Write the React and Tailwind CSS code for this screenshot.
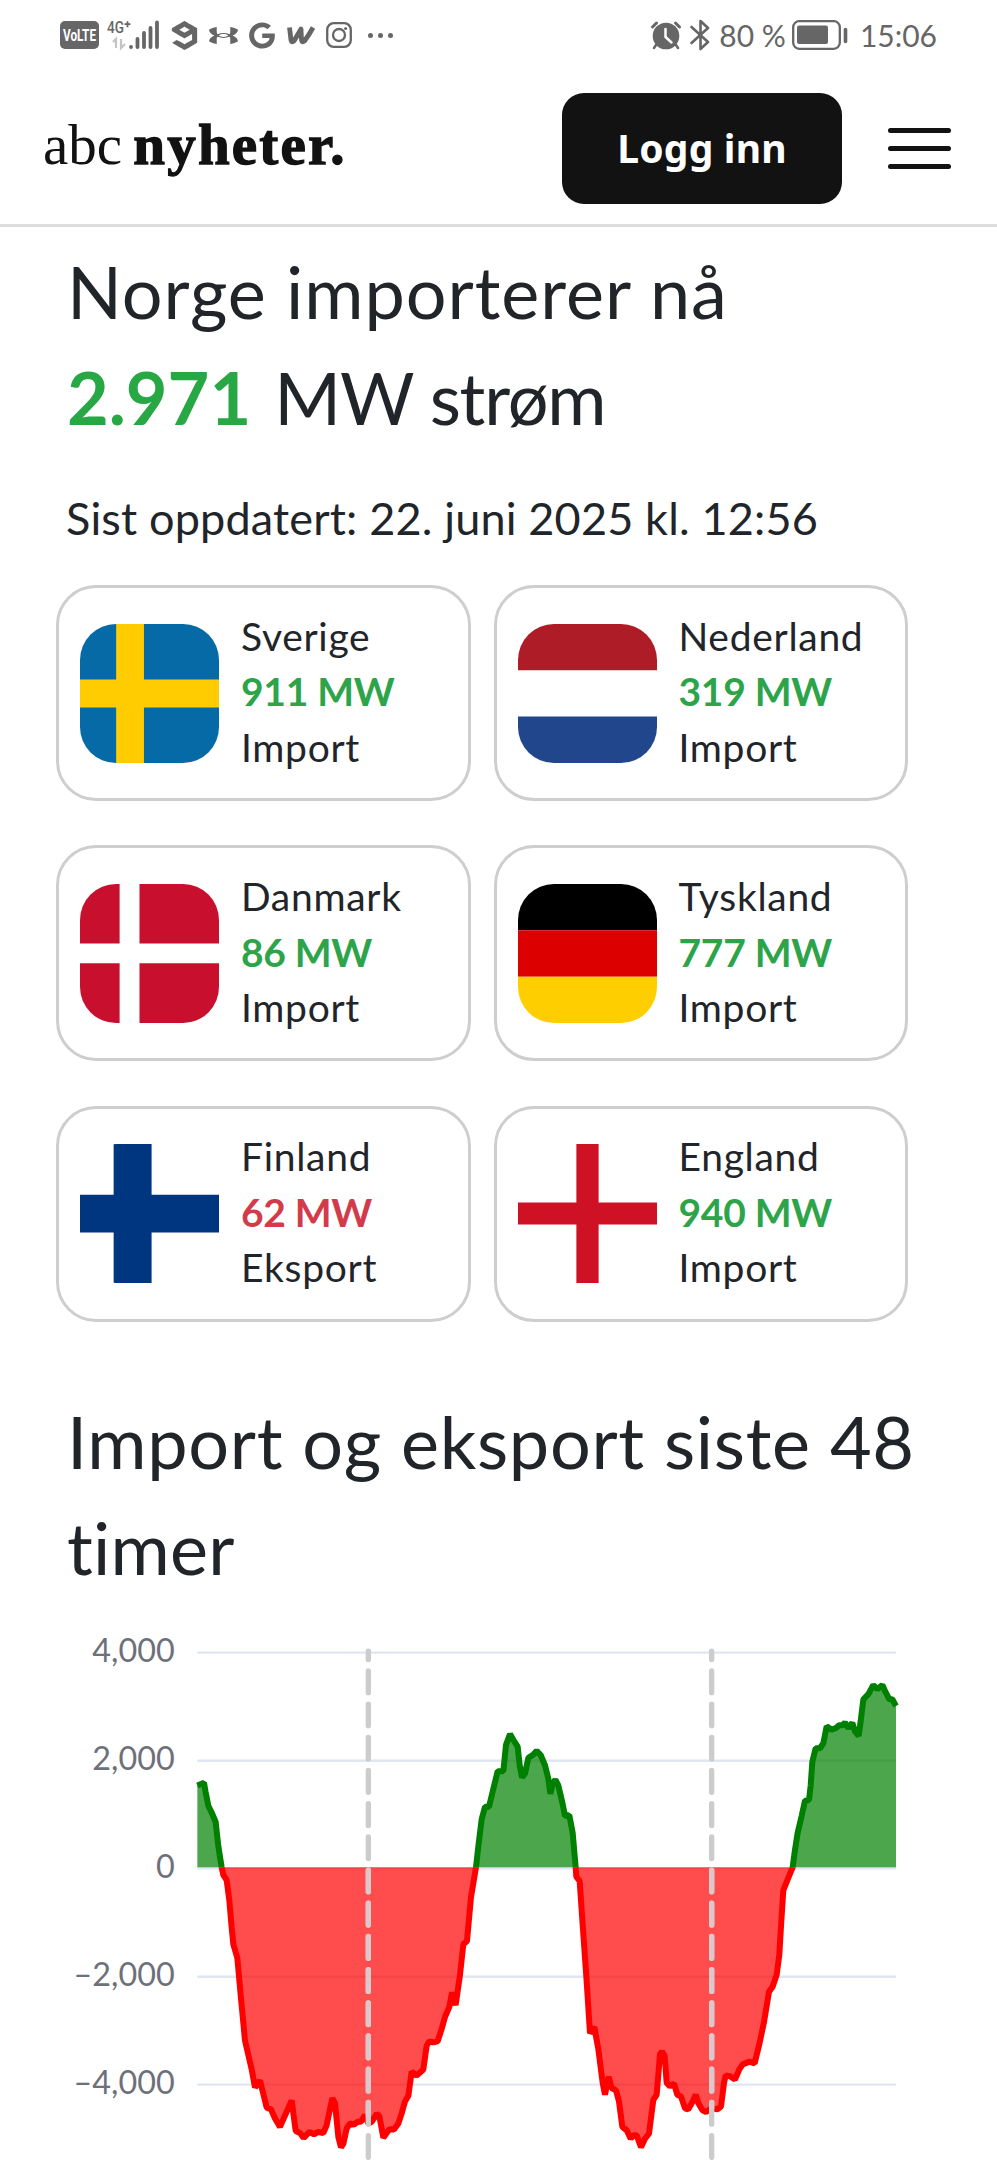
import { FaGoogle } from "react-icons/fa";
import { Si9Gag, SiUnderarmour } from "react-icons/si";

const countries = [
    { name: "Sverige", value: "911 MW", type: "Import", flag: SwedenFlag },
    { name: "Nederland", value: "319 MW", type: "Import", flag: NetherlandsFlag },
    { name: "Danmark", value: "86 MW", type: "Import", flag: DenmarkFlag },
    { name: "Tyskland", value: "777 MW", type: "Import", flag: GermanyFlag },
    { name: "Finland", value: "62 MW", type: "Eksport", flag: FinlandFlag },
    { name: "England", value: "940 MW", type: "Import", flag: EnglandFlag },
];

// x,y pairs in the plot's own units, y = 702 is 0 MW
const curve = [
    "592,460 612,452 617,480 625,520 635,540 647,568 655,640 665,702 670,725 680,740 688,800 695,880 700,930 712,970",
    "722,1080 735,1215 755,1300 765,1353 780,1333 788,1365 800,1413 813,1418 825,1445 840,1470 860,1425 875,1392",
    "880,1430 887,1482 900,1488 911,1503 928,1485 942,1492 955,1485 970,1488 980,1465 997,1385 1005,1400 1015,1500",
    "1023,1530 1030,1520 1040,1475 1050,1460 1062,1463 1073,1455 1083,1455 1095,1435 1105,1460 1115,1455 1130,1432",
    "1138,1438 1150,1502 1168,1477 1182,1478 1195,1460 1205,1430 1215,1395 1225,1378 1235,1307 1250,1318 1270,1300",
    "1280,1230 1288,1217 1300,1220 1313,1217 1325,1180 1335,1145 1348,1115 1356,1072 1367,1110 1380,1020 1390,930",
    "1401,920 1413,790 1428,702 1435,640 1445,560 1455,523 1467,523 1480,470 1493,418 1510,418 1518,340 1530,308",
    "1540,325 1553,345 1559,400 1566,436 1575,425 1585,378 1598,370 1610,358 1622,370 1635,400 1645,440 1651,485",
    "1658,455 1666,443 1675,460 1688,515 1695,550 1708,548 1718,600 1727,702 1729,730 1739,743 1750,900 1760,1040",
    "1770,1193 1783,1175 1795,1240 1808,1340 1815,1375 1826,1322 1835,1355 1848,1362 1857,1395 1867,1470 1880,1480",
    "1892,1505 1900,1495 1910,1495 1923,1530 1935,1505 1947,1490 1960,1390 1970,1375 1980,1255 1986,1247 1994,1260",
    "2000,1340 2010,1350 2022,1342 2032,1375 2043,1380 2055,1415 2065,1418 2078,1395 2087,1375 2095,1400 2107,1420",
    "2118,1426 2135,1415 2152,1418 2163,1410 2172,1340 2177,1318 2190,1320 2205,1330 2218,1300 2228,1285 2248,1277",
    "2264,1282 2278,1225 2292,1160 2307,1070 2318,1055 2330,1020 2338,960 2344,860 2350,770 2360,745 2378,702",
    "2385,650 2393,600 2405,550 2415,505 2427,503 2432,460 2437,390 2447,350 2460,350 2470,335 2480,285 2495,295",
    "2508,290 2517,282 2527,282 2535,274 2545,290 2557,275 2565,300 2576,313 2582,270 2590,205 2605,190 2620,163",
    "2632,175 2647,163 2655,180 2668,205 2677,205 2688,225",
].join(" ");

const ticks = [
    { label: "4,000", y: 67 },
    { label: "2,000", y: 387 },
    { label: "0", y: 705 },
    { label: "–2,000", y: 1026 },
    { label: "–4,000", y: 1345 },
];

function SwedenFlag() {
    return (
        <svg viewBox="0 0 100 100" className="size-full">
            <path fill="#066aa7" d="M0 0h100v100H0z" />
            <path fill="#fecc00" d="M26 0h20v100H26zM0 40h100v20H0z" />
        </svg>
    )
}

function NetherlandsFlag() {
    return (
        <svg viewBox="0 0 100 100" className="size-full">
            <path fill="#fff" d="M0 0h100v100H0z" />
            <path fill="#ae1c28" d="M0 0h100v33.3H0z" />
            <path fill="#21468b" d="M0 66.6h100V100H0z" />
        </svg>
    )
}

function DenmarkFlag() {
    return (
        <svg viewBox="0 0 100 100" className="size-full">
            <path fill="#c8102e" d="M0 0h100v100H0z" />
            <path fill="#fff" d="M28.5 0h14.3v100H28.5zM0 42.8h100v14.3H0z" />
        </svg>
    )
}

function GermanyFlag() {
    return (
        <svg viewBox="0 0 100 100" className="size-full">
            <path d="M0 0h100v33.3H0z" />
            <path fill="#d00" d="M0 33.3h100v33.4H0z" />
            <path fill="#ffce00" d="M0 66.7h100V100H0z" />
        </svg>
    )
}

function FinlandFlag() {
    return (
        <svg viewBox="0 0 100 100" className="size-full">
            <path fill="#fff" d="M0 0h100v100H0z" />
            <path fill="#003580" d="M24.2 0h27.3v100H24.2zM0 36.5h100v27.2H0z" />
        </svg>
    )
}

function EnglandFlag() {
    return (
        <svg viewBox="0 0 100 100" className="size-full">
            <path fill="#fff" d="M0 0h100v100H0z" />
            <path fill="#ce1124" d="M42 0h16v100H42zM0 42h100v16H0z" />
        </svg>
    )
}

function StatusBar() {
    return (
        <div className="flex h-[70px] items-center justify-between pl-[60px] pr-[60px] text-[#666]">
            <div className="flex items-center">
                <svg width="39" height="28" viewBox="0 0 39 28" className="overflow-visible">
                    <rect width="39" height="28" rx="5" fill="#666" />
                    <text x="3" y="20" fill="#fff" fontFamily="Roboto, sans-serif" fontSize="16.500" fontWeight="700" textLength="33" lengthAdjust="spacingAndGlyphs">VoLTE</text>
                </svg>
                {/* Signal */}
                <svg width="52" height="30" viewBox="0 0 52 30" className="ml-2 overflow-visible">
                    <text x="0" y="13" fill="#666" fontFamily="Roboto, sans-serif" fontSize="17" fontWeight="500" textLength="17" lengthAdjust="spacingAndGlyphs">4G</text>
                    <path d="M20.500 1.200v6M17.500 4.200h6" stroke="#666" strokeWidth="1.800" />
                    <path d="M6 22l3-3v9M14 19v9l4-4" stroke="#c4c4c4" strokeWidth="2.200" fill="none" />
                    <path d="M24 27h.01M30.500 27v-8M37 27v-14M43.500 27V8M50 27V2.500" stroke="#666" strokeWidth="3.800" strokeLinecap="round" />
                </svg>
                <Si9Gag className="ml-[11px] size-[29px]" />
                <SiUnderarmour className="ml-[10px] size-[29px]" />
                <FaGoogle className="ml-[10px] h-[27px] w-[28px]" />
                <svg width="30" height="20" viewBox="0 0 30 20" className="ml-[10px]">
                    <path d="M3.500 2.500L5 15q.5 3 3 1L15 4l.5 11q.5 3 3 1Q23 10 27 2.500" fill="none" stroke="#666" strokeWidth="4.800" strokeLinejoin="round" />
                </svg>
                <svg width="26" height="26" viewBox="0 0 26 26" className="ml-[10px]" fill="none" stroke="#666" strokeWidth="2.300">
                    <rect x="1.200" y="1.200" width="23.600" height="23.600" rx="6.500" />
                    <circle cx="13" cy="13" r="6" />
                    <circle cx="19.600" cy="6.500" r="1.500" fill="#666" stroke="none" />
                </svg>
                <span className="ml-4 flex gap-[5px]">
                    <i className="size-[5px] rounded-full bg-[#666]" />
                    <i className="size-[5px] rounded-full bg-[#666]" />
                    <i className="size-[5px] rounded-full bg-[#666]" />
                </span>
            </div>
            <div className="flex items-center">
                {/* Alarm */}
                <svg width="32" height="30" viewBox="0 0 32 30" fill="none" stroke="#666" strokeLinecap="round">
                    <circle cx="16" cy="16" r="13.300" fill="#666" stroke="none" />
                    <path d="M2.500 7L6.500 3M29.500 7l-4-4" strokeWidth="3" />
                    <path d="M6 25l-2 3M26 25l2 3" strokeWidth="2.500" />
                    <path d="M15.500 9v8l6 5.500" stroke="#fff" strokeWidth="2.500" />
                </svg>
                {/* Bluetooth */}
                <svg width="20" height="32" viewBox="0 0 20 32" className="ml-2" fill="none" stroke="#666" strokeWidth="2.600" strokeLinejoin="round" strokeLinecap="round">
                    <path d="M1.500 8L18 23l-7.500 7V2L18 9 1.500 24" />
                </svg>
                <span className="ml-[9px] font-['Lato',sans-serif] text-[30px] leading-none">80 %</span>
                <svg width="56" height="30" viewBox="0 0 56 30" className="ml-[6px]">
                    <rect x="1.200" y="1.200" width="46.600" height="27.600" rx="6" fill="none" stroke="#666" strokeWidth="2.300" />
                    <rect x="5" y="5.500" width="31" height="18.500" rx="2" fill="#666" />
                    <path d="M53.500 9.500v12" stroke="#666" strokeWidth="3.600" strokeLinecap="round" />
                </svg>
                <span className="ml-3 font-['Lato',sans-serif] text-[30px] leading-none">15:06</span>
            </div>
        </div>
    )
}

function Header() {
    return (
        <header className="flex h-[157px] items-start border-b-[3px] border-[#ddd] pl-[43px] pr-[46px] text-[#121212]">
            <div className="flex h-[111px] flex-1 mt-[19px] items-center">
                <p className="whitespace-nowrap font-['Liberation_Serif',serif] text-[57px] leading-none">
                    abc <b className="-ml-[3px] tracking-[2.2px] [-webkit-text-stroke:1.3px_#121212]">nyheter.</b>
                </p>
            </div>
            <button className="mt-[23px] h-[111px] w-[280px] rounded-[22px] bg-[#121212] font-['Noto_Sans',sans-serif] text-[39px] font-bold tracking-[0.2px] text-white">Logg inn</button>
            <div className="ml-[46px] mt-[58px] flex w-[63px] flex-col gap-[13px]">
                <span className="h-[5px] rounded-full bg-[#121212]" />
                <span className="h-[5px] rounded-full bg-[#121212]" />
                <span className="h-[5px] rounded-full bg-[#121212]" />
            </div>
        </header>
    )
}

function CountryCard({ country }) {
    const Flag = country.flag
    return (
        <div className="flex h-[216px] items-center rounded-[40px] border-[3px] border-[#cecece] pl-[21px]">
            <div className="size-[139px] overflow-hidden rounded-[36px]">
                <Flag />
            </div>
            <div className="ml-[22px] -mt-0.5 text-[39px] leading-[55.5px] tracking-[0.7px]">
                <p>{country.name}</p>
                <p className={country.type === "Import" ? "font-bold tracking-[-0.3px] text-[#2da44a]" : "font-bold tracking-[-0.3px] text-[#d33a4a]"}>{country.value}</p>
                <p>{country.type}</p>
            </div>
        </div>
    )
}

function Chart() {
    const area = `592,702 ${curve} 2688,702`
    return (
        <svg viewBox="0 0 2991 1590" className="block h-[530px] w-[997px]">
            <defs>
                <clipPath id="above"><rect x="580" y="0" width="2130" height="702" /></clipPath>
                <clipPath id="below"><rect x="580" y="702" width="2130" height="888" /></clipPath>
                <clipPath id="area"><polygon points={area} /></clipPath>
            </defs>
            {ticks.map((tick) => (
                <text key={tick.label} x="524" y={tick.y * 1.014 + 29} textAnchor="end" fill="#6e7079" fontFamily="Lato, sans-serif" fontSize="97">{tick.label}</text>
            ))}
            <g transform="scale(1 1.014)">
                {ticks.map((tick) => (
                    <path key={tick.label} d={`M592 ${tick.y}H2688`} stroke="#e0e6f1" strokeWidth="7" />
                ))}
                <g clipPath="url(#above)">
                    <polygon points={area} fill="green" fillOpacity="0.7" />
                    <polyline points={curve} fill="none" stroke="green" strokeWidth="18" strokeLinejoin="bevel" />
                </g>
                <g clipPath="url(#below)">
                    <polygon points={area} fill="red" fillOpacity="0.7" />
                    <polyline points={curve} fill="none" stroke="red" strokeWidth="18" strokeLinejoin="bevel" />
                </g>
                {/* Midnight markers */}
                <g stroke="#ccc" strokeWidth="16" strokeLinecap="round" strokeDasharray="64.200 34" strokeDashoffset="40">
                    <path d="M1105 63V1600M2135 63V1600" />
                    <path d="M1105 63V1600M2135 63V1600" stroke="#dcc8ca" clipPath="url(#area)" />
                </g>
            </g>
        </svg>
    )
}

export default function App() {
    return (
        <div className="h-[2160px] w-[997px] overflow-hidden bg-white font-['Lato',sans-serif] text-[#212529]">
            <StatusBar />
            <Header />
            <main>
                <h1 className="mt-[11px] pl-[67px] text-[72px] leading-[106px] tracking-[0.95px]">
                    Norge importerer nå<br />
                    <b className="mr-[6px] tracking-normal text-[#28a745]">2.971</b><span className="tracking-[-1.2px]"> MW strøm</span>
                </h1>
                <p className="mt-[34px] pl-[66px] text-[45px] leading-[68px] tracking-[0.17px]">Sist oppdatert: 22. juni 2025 kl. 12:56</p>
                <div className="ml-[56px] mt-[33px] grid w-[852px] grid-cols-2 gap-x-[23px] gap-y-[44.300px]">
                    {countries.map((country) => (
                        <CountryCard key={country.name} country={country} />
                    ))}
                </div>
                <h2 className="mt-[66px] pl-[67px] text-[72px] leading-[106px] tracking-[0.7px]">
                    Import og eksport siste 48<br /><span className="tracking-[0.2px]">timer</span>
                </h2>
                <div className="mt-[30px]">
                    <Chart />
                </div>
            </main>
        </div>
    )
}
